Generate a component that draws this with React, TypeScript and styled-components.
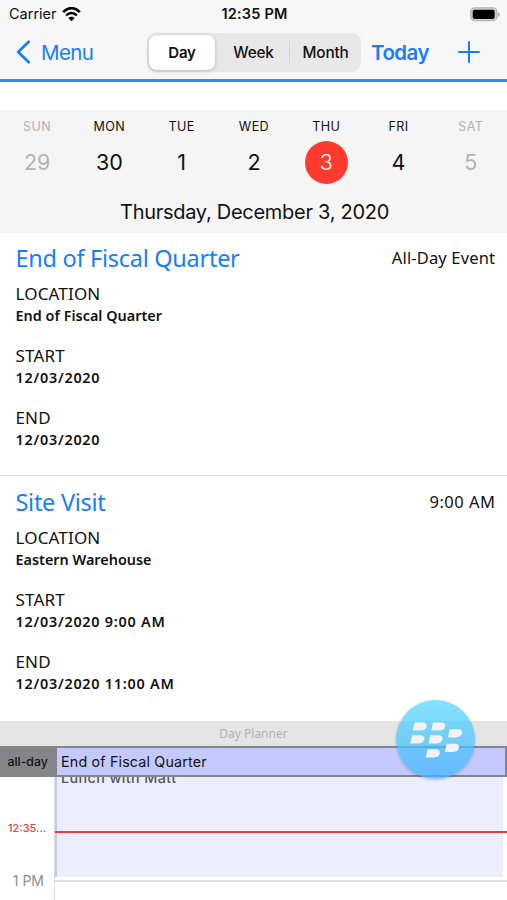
import React from "react";
import styled, { createGlobalStyle, css } from "styled-components";

const BLUE = "#167efb";

const GlobalStyle = createGlobalStyle`
  *, *::before, *::after { box-sizing: border-box; }
  body { margin: 0; background: #fff; overflow: hidden; }
`;

const Screen = styled.div`
  width: 507px;
  height: 900px;
  overflow: hidden;
  position: relative;
  display: flex;
  flex-direction: column;
  background: #fff;
  color: #111;
  font-family: Inter, "Liberation Sans", sans-serif;
  white-space: nowrap;
`;

const StatusBar = styled.header`
  height: 28px;
  flex: none;
  padding: 0 7px 0 9px;
  display: grid;
  grid-template-columns: 1fr auto 1fr;
  align-items: center;
  background: #f7f7f7;
  font-size: 14.5px;
  line-height: 28px;
`;

const Carrier = styled.div`
  display: flex;
  align-items: center;
  gap: 5px;
`;

const Clock = styled.div`
  font-weight: 600;
  font-size: 14.5px;
  letter-spacing: 0.2px;
`;

const Battery = styled.svg`
  justify-self: end;
`;

const NavBar = styled.nav`
  height: 54px;
  flex: none;
  display: flex;
  align-items: center;
  padding: 0 27px 3px 16px;
  background: #f7f7f7;
  border-bottom: 3px solid #2f8cf3;
`;

const BackButton = styled.div`
  display: flex;
  align-items: center;
  gap: 10px;
  width: 131px;
  color: ${BLUE};
  font-size: 20.5px;
  letter-spacing: -0.6px;
`;

const Segments = styled.div`
  display: flex;
  align-items: center;
  width: 214px;
  height: 39px;
  padding: 2px 0 2px 2px;
  border-radius: 9px;
  background: #e8e8e8;
`;

const Segment = styled.div<{ $active?: boolean }>`
  flex: 1;
  height: 35px;
  display: flex;
  align-items: center;
  justify-content: center;
  border-radius: 8px;
  font-size: 15.3px;
  font-weight: 500;
  letter-spacing: -0.2px;
  ${({ $active }) =>
    $active &&
    css`
      flex: 0 0 66px;
      margin-right: 3px;
      background: #fff;
      font-weight: 600;
      font-size: 15px;
      box-shadow: 0 1px 4px rgba(0, 0, 0, 0.22);
    `}
`;

const SegmentRule = styled.i`
  width: 1px;
  height: 22px;
  background: #d3d3d3;
`;

const TodayButton = styled.div`
  margin-left: 10px;
  width: 87px;
  color: ${BLUE};
  font-size: 20.5px;
  font-weight: 600;
  letter-spacing: -0.55px;
`;

const WeekPanel = styled.section`
  flex: none;
  height: 123px;
  margin-top: 28px;
  background: #f5f5f5;
`;

const WeekRow = styled.div`
  display: grid;
  grid-template-columns: repeat(7, 1fr);
  height: 75px;
  padding: 7px 0 0 1px;
`;

const DayCell = styled.div<{ $muted?: boolean }>`
  display: flex;
  flex-direction: column;
  align-items: center;
  color: ${({ $muted }) => ($muted ? "#b4b4b4" : "#111")};
`;

const DayName = styled.div`
  height: 24px;
  line-height: 19px;
  font-size: 12.6px;
  letter-spacing: 0.4px;
`;

const DayNumber = styled.div<{ $selected?: boolean }>`
  width: 43px;
  height: 43px;
  line-height: 43px;
  border-radius: 50%;
  text-align: center;
  font-size: 21.5px;
  ${({ $selected }) =>
    $selected &&
    css`
      background: #ff3b30;
      color: #fff;
      font-weight: 300;
    `}
`;

const DateTitle = styled.div`
  text-align: center;
  height: 48px;
  line-height: 54px;
  padding-left: 2px;
  font-size: 20px;
  letter-spacing: -0.28px;
`;

const EventCard = styled.article<{ $last?: boolean }>`
  flex: none;
  height: ${({ $last }) => ($last ? 245 : 243)}px;
  padding: ${({ $last }) => ($last ? 9 : 8)}px 12px 0 15.5px;
  border-bottom: ${({ $last }) => ($last ? 0 : 1)}px solid #dedede;
  font-family: "Noto Sans", sans-serif;
`;

const EventHeader = styled.div`
  display: flex;
  justify-content: space-between;
  align-items: center;
  height: 33px;
  margin-bottom: 9px;
`;

const EventTitle = styled.h2`
  margin: 0;
  color: ${BLUE};
  font-size: 23.5px;
  font-weight: 400;
  letter-spacing: -0.28px;
`;

const EventTime = styled.div<{ $spacing: number }>`
  font-size: 16.5px;
  letter-spacing: ${({ $spacing }) => $spacing}px;
  margin-right: ${({ $spacing }) => -$spacing}px;
`;

const Field = styled.div`
  height: 62px;
`;

const FieldName = styled.div`
  height: 22px;
  line-height: 22px;
  font-size: 17px;
  letter-spacing: 0.15px;
`;

const FieldValue = styled.div<{ $spacing?: number }>`
  height: 22px;
  line-height: 21px;
  font-size: 14.4px;
  font-weight: 600;
  letter-spacing: ${({ $spacing = 0 }) => $spacing}px;
`;

const PlannerTitle = styled.div`
  flex: none;
  height: 25px;
  line-height: 25px;
  text-align: center;
  background: #e5e5e5;
  color: #b2b2b2;
  font-family: "Noto Sans", sans-serif;
  font-size: 12px;
`;

const AllDayRow = styled.div`
  flex: none;
  display: flex;
  height: 31px;
  padding: 2px 2px 2px 0;
  background: #858589;
`;

const AllDayLabel = styled.div`
  width: 57px;
  padding-left: 7.5px;
  line-height: 28px;
  font-size: 12.3px;
  font-weight: 500;
`;

const AllDayEvent = styled.div`
  flex: 1;
  padding-left: 4px;
  line-height: 27px;
  background: #c4c9ff;
  font-size: 14.3px;
  letter-spacing: 0.17px;
`;

const Timeline = styled.div`
  flex: 1;
  position: relative;
  display: flex;
  overflow: hidden;
`;

const Hours = styled.div`
  width: 55px;
  border-right: 1px solid #ddd;
`;

const NowLabel = styled.div`
  margin-top: 41px;
  padding-left: 8px;
  height: 21px;
  line-height: 20px;
  color: #f03c3c;
  font-size: 11px;
  font-weight: 500;
`;

const HourLabel = styled.div`
  margin-top: 32px;
  padding-right: 10px;
  text-align: right;
  line-height: 20px;
  color: #8e8e8e;
  font-size: 14px;
`;

const Lane = styled.div`
  flex: 1;
  height: 105px;
  border-bottom: 2px solid #dfdfe2;
`;

const LaneEvent = styled.div`
  height: 100px;
  margin-right: 4px;
  overflow: hidden;
  padding-left: 4px;
  border-left: 2px solid #c5c9fd;
  background: #eceefe;
  color: #55565e;
  font-size: 14.3px;
  font-weight: 500;
  line-height: 20px;
  letter-spacing: 0.42px;

  span { display: block; margin-top: -9px; }
`;

const NowLine = styled.i`
  position: absolute;
  left: 55px;
  right: 0;
  top: 53.5px;
  height: 2px;
  background: #ec3a43;
`;

const FloatingButton = styled.div`
  position: absolute;
  left: 396px;
  top: 700px;
  width: 79px;
  height: 79px;
  border-radius: 50%;
  background: linear-gradient(rgba(76, 214, 250, 0.7), rgba(72, 180, 255, 0.74));
  box-shadow: 0 1px 3px rgba(0, 0, 0, 0.22);
`;

type CalendarEvent = {
  title: string;
  time: string;
  timeSpacing: number;
  fields: [string, string, number][];
};

const events: CalendarEvent[] = [
  {
    title: "End of Fiscal Quarter",
    time: "All-Day Event",
    timeSpacing: 0.15,
    fields: [
      ["LOCATION", "End of Fiscal Quarter", 0.03],
      ["START", "12/03/2020", 0.75],
      ["END", "12/03/2020", 0.75],
    ],
  },
  {
    title: "Site Visit",
    time: "9:00 AM",
    timeSpacing: 0.5,
    fields: [
      ["LOCATION", "Eastern Warehouse", 0],
      ["START", "12/03/2020 9:00 AM", 0.75],
      ["END", "12/03/2020 11:00 AM", 0.75],
    ],
  },
];

const days = [
  ["SUN", "29"],
  ["MON", "30"],
  ["TUE", "1"],
  ["WED", "2"],
  ["THU", "3"],
  ["FRI", "4"],
  ["SAT", "5"],
];

const logoCells = [
  [16.7, 22.4],
  [35.2, 22.4],
  [14.3, 35.3],
  [32.5, 35.3],
  [52, 29.2],
  [49, 43.8],
  [29.8, 49.2],
];

const Wifi = () => (
  <svg width="19" height="15" viewBox="0 0 19 15" fill="none" stroke="#000">
    <path d="M1.2 5.2C6-.2 13-.2 17.8 5.2" strokeWidth="2.7" />
    <path d="M4.2 8.5c3-3.3 7.6-3.3 10.6 0" strokeWidth="2.5" />
    <path d="M9.5 14.2 6.3 11c1.8-1.8 4.6-1.8 6.4 0Z" fill="#000" stroke="none" />
  </svg>
);

export default function App() {
  return (
    <>
      <GlobalStyle />
      <Screen>
        <StatusBar>
          <Carrier>
            Carrier <Wifi />
          </Carrier>
          <Clock>12:35 PM</Clock>
          <Battery width="30" height="15" viewBox="0 0 30 15">
            <rect x="0.8" y="0.8" width="26" height="12.9" rx="4" fill="#d2d2d2" stroke="#b4b4b4" strokeWidth="1.3" />
            <rect x="2.7" y="2.7" width="22" height="9.2" rx="2" fill="#000" />
            <path d="M28 5v5c2.2-.8 2.2-4.2 0-5Z" fill="#adadad" />
          </Battery>
        </StatusBar>
        <NavBar>
          <BackButton>
            <svg width="15" height="24" viewBox="0 0 15 24" fill="none" stroke={BLUE} strokeWidth="2.7" strokeLinecap="round" strokeLinejoin="round">
              <path d="M12.7 1.8 2.2 12l10.5 10.2" />
            </svg>
            Menu
          </BackButton>
          <Segments>
            <Segment $active>Day</Segment>
            <Segment>Week</Segment>
            <SegmentRule />
            <Segment>Month</Segment>
          </Segments>
          <TodayButton>Today</TodayButton>
          <svg width="22" height="22" viewBox="0 0 22 22" stroke={BLUE} strokeWidth="2" strokeLinecap="round">
            <path d="M11 1v20M1 11h20" />
          </svg>
        </NavBar>
        <WeekPanel>
          <WeekRow>
            {days.map(([name, number], i) => (
              <DayCell key={name} $muted={i === 0 || i === 6}>
                <DayName>{name}</DayName>
                <DayNumber $selected={number === "3"}>{number}</DayNumber>
              </DayCell>
            ))}
          </WeekRow>
          <DateTitle>Thursday, December 3, 2020</DateTitle>
        </WeekPanel>
        {events.map((event, i) => (
          <EventCard key={event.title} $last={i === events.length - 1}>
            <EventHeader>
              <EventTitle>{event.title}</EventTitle>
              <EventTime $spacing={event.timeSpacing}>{event.time}</EventTime>
            </EventHeader>
            {event.fields.map(([name, value, spacing]) => (
              <Field key={name}>
                <FieldName>{name}</FieldName>
                <FieldValue $spacing={spacing}>{value}</FieldValue>
              </Field>
            ))}
          </EventCard>
        ))}
        <PlannerTitle>Day Planner</PlannerTitle>
        <AllDayRow>
          <AllDayLabel>all-day</AllDayLabel>
          <AllDayEvent>End of Fiscal Quarter</AllDayEvent>
        </AllDayRow>
        <Timeline>
          <Hours>
            <NowLabel>12:35...</NowLabel>
            <HourLabel>1 PM</HourLabel>
          </Hours>
          <Lane>
            <LaneEvent>
              <span>Lunch with Matt</span>
            </LaneEvent>
          </Lane>
          <NowLine />
        </Timeline>
        <FloatingButton>
          <svg width="79" height="79" viewBox="0 0 79 79" fill="#f2f2f8">
            {logoCells.map(([x, y]) => (
              <path key={`${x}-${y}`} transform={`translate(${x} ${y})`} d="M1.7 0h8.600c5.800 0 5 8.200-2.300 8.200H0Z" />
            ))}
          </svg>
        </FloatingButton>
      </Screen>
    </>
  );
}
